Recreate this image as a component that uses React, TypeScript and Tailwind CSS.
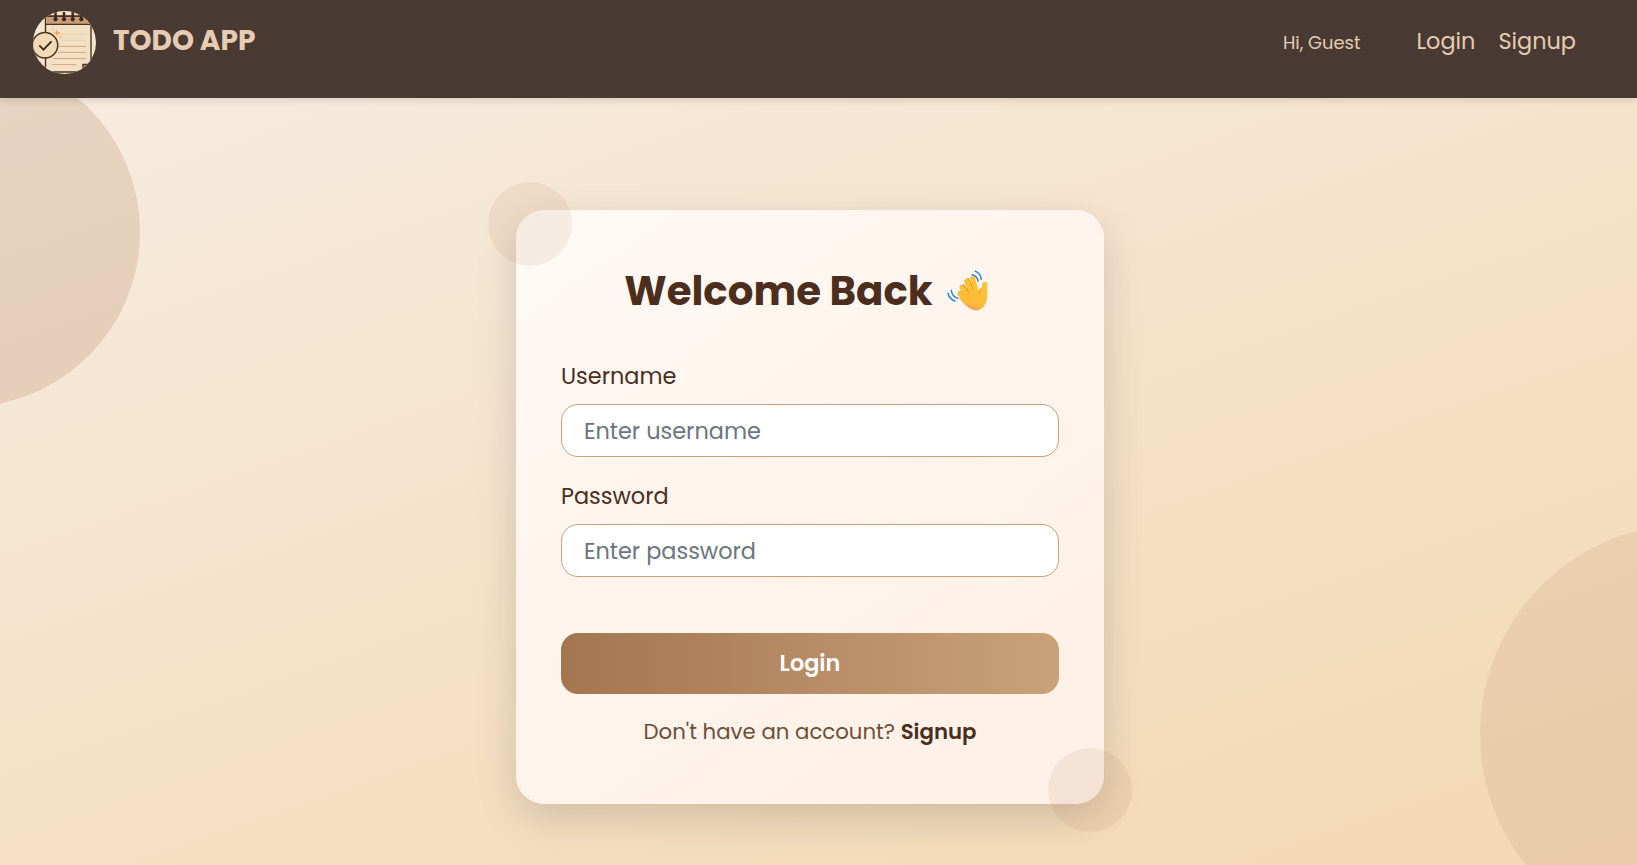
import { useState } from "react";

function Logo() {
  return (
    <svg viewBox="0 0 63 63" className="h-[63px] w-[63px] shrink-0" aria-label="Todo app logo">
      <defs>
        <clipPath id="logo-clip"><circle cx="31.5" cy="31.5" r="31.5" /></clipPath>
      </defs>
      <g clipPath="url(#logo-clip)">
        <rect width="63" height="63" fill="#f6e5cc" />
        <rect x="12.5" y="5.5" width="45.5" height="55.5" rx="2" fill="#f1e0c4" stroke="#4a3222" strokeWidth="1.4" />
        <rect x="13.2" y="6" width="44" height="7" fill="#c99c77" />
        <path d="M12.5 13.3H58M12.5 4.8H58" stroke="#4a3222" strokeWidth="1.3" />
        <path d="M22.5 1v7M31 1v7M39.7 1v7M48.3 1v7" stroke="#39291f" strokeWidth="2.5" />
        <g fill="#39291f">
          <circle cx="22.5" cy="8.3" r="2.1" /><circle cx="31" cy="8.3" r="2.1" />
          <circle cx="39.7" cy="8.3" r="2.1" /><circle cx="48.3" cy="8.3" r="2.1" />
        </g>
        <path d="M29 23.3h24M27 29.3h26" stroke="#e6cfab" strokeWidth="1" />
        <path d="M25 35.4h28M25 41.4h28M20 47.5h33M19 53.6h24" stroke="#d0a884" strokeWidth="1" />
        <path d="M50 63v-9.5h8" fill="#c99c77" stroke="#4a3222" strokeWidth="1.4" />
        <path d="M24 18l1 2.9 2.9 1-2.9 1-1 2.9-1-2.9-2.9-1 2.9-1zM27.8 24l.5 1.4 1.4.5-1.4.5-.5 1.4-.5-1.4-1.4-.5 1.4-.5zM20 17.5l.3 1 .9.3-.9.3-.3.9-.3-.9-.9-.3.9-.3z" fill="#f1a957" />
        <circle cx="12" cy="34.2" r="12.7" fill="#f2d9b8" stroke="#4a3222" strokeWidth="1.5" />
        <path d="M6.3 34.4l4.2 4.2 8-8.2" fill="none" stroke="#39291f" strokeWidth="1.9" />
      </g>
    </svg>
  );
}

function WavingHand() {
  return (
    <svg viewBox="0 0 42 42" className="h-[42px] w-[42px] shrink-0" aria-label="waving hand">
      <defs>
        <linearGradient id="hand-fill" gradientUnits="userSpaceOnUse" x1="33" y1="10" x2="22" y2="41">
          <stop offset="0" stopColor="#ffc631" />
          <stop offset="0.78" stopColor="#ffb93c" />
          <stop offset="1" stopColor="#f98e66" />
        </linearGradient>
      </defs>
      <g fill="none" stroke="#1b7fcc" strokeWidth="1.4" strokeLinecap="round">
        <path d="M25 4.6c3.3.9 5.6 3.2 6.2 6.8M28.2 1.2c3.5 1.3 5.7 4.3 6 8.2M4.4 20.2c.2 3.7 2.6 6.8 6.3 8.2M1 23.2c.5 3.7 2.9 6.5 6.9 7.8" />
      </g>
      <path
        d="M12 27.5L22 17L31 21C33 17.5 38 16 40 18C40.5 22 40.6 27.5 39.5 31.5C37.5 37.5 33.5 40.6 28.5 40.4C24 40 20 37 17 33.6C14.6 31 12 28.5 10.8 25.4Z"
        fill="url(#hand-fill)"
      />
      <g fill="none" strokeLinecap="round">
        <path d="M13.4 23.2l7 6" stroke="#d98a1c" strokeWidth="4.8" />
        <path d="M12.8 23.8l8 7.6" stroke="url(#hand-fill)" strokeWidth="4.8" />
        <path d="M15.8 16.8l7 9.8" stroke="#d98a1c" strokeWidth="4.8" />
        <path d="M15 17.3l7.6 11.6" stroke="url(#hand-fill)" strokeWidth="4.9" />
        <path d="M20.4 10.8l5.6 11.6" stroke="#d98a1c" strokeWidth="4.8" />
        <path d="M19.6 11.2l6.2 14" stroke="url(#hand-fill)" strokeWidth="4.9" />
        <path d="M25.6 8.6l4.8 16" stroke="url(#hand-fill)" strokeWidth="5" />
        <path d="M37.7 14.2l-.7 9" stroke="url(#hand-fill)" strokeWidth="5" />
        <path d="M34.4 18.6c-.5 2.3-2.2 3.2-2.1 5.4" stroke="#e2941f" strokeWidth="0.8" />
      </g>
    </svg>
  );
}

interface FieldProps {
  id: string;
  label: string;
  type: string;
  value: string;
  onChange: (value: string) => void;
}

function Field({ id, label, type, value, onChange }: FieldProps) {
  return (
    <div className="flex flex-col">
      <label htmlFor={id} className="mb-[11px] text-[22.4px] leading-[34px] text-[#4b2e1e]">{label}</label>
      <input
        id={id}
        type={type}
        value={value}
        onChange={(e) => onChange(e.target.value)}
        placeholder={`Enter ${id}`}
        className="h-[53px] w-full rounded-[17px] border border-[#c9a27a] bg-white px-[22px] text-[22.4px] text-[#4b2e1e] outline-none placeholder:text-[#6c757d]"
      />
    </div>
  );
}

export default function App() {
  const [username, setUsername] = useState("");
  const [password, setPassword] = useState("");

  return (
    <div className="flex h-screen flex-col overflow-hidden font-[Poppins,Inter,sans-serif]">
      <header className="z-10 flex h-[98px] shrink-0 items-start justify-between bg-[#493b34] pl-[33px] pr-[61px] pt-[11px] text-[#e6ccb2] shadow-[0_3px_7px_rgba(0,0,0,0.1)]">
        <div className="flex items-center gap-[17px]">
          <Logo />
          <span className="-mt-[3px] text-[28px] font-bold leading-none">TODO APP</span>
        </div>
        <nav className="flex h-[61px] items-center">
          <span className="mr-[56px] mt-[4px] text-[17.92px]">Hi, Guest</span>
          <a href="#login" className="mr-[23px] text-[22.4px]">Login</a>
          <a href="#signup" className="text-[22.4px]">Signup</a>
        </nav>
      </header>

      <main className="relative flex flex-1 justify-center overflow-hidden bg-[linear-gradient(161deg,#f7ebde,#f3d8b3)] pr-[17px] pt-[112px]">
        <div className="absolute -left-[210px] -top-[41px] h-[350px] w-[350px] rounded-full bg-[#a47551]/20" />
        <div className="absolute -right-[263px] top-[426px] h-[420px] w-[420px] rounded-full bg-[#a47551]/12" />

        <section className="relative flex h-[594px] w-[588px] flex-col rounded-[28px] bg-[linear-gradient(145deg,#fffaf4,#fff5ee_40%,#fdf0e5)] px-[45px] pt-[56px] shadow-[0_14px_42px_rgba(0,0,0,0.15)]">
          <div className="absolute -left-[28px] -top-[28px] h-[84px] w-[84px] rounded-full bg-[#a47551]/10" />
          <div className="absolute -bottom-[28px] -right-[28px] h-[84px] w-[84px] rounded-full bg-[#a47551]/10" />

          <h1 className="flex h-[50px] items-center justify-center gap-[14px] pr-[7px] text-[40.32px] font-bold text-[#4b2e1e]">
            <span>Welcome Back</span>
            <WavingHand />
          </h1>

          <form className="mt-[43px] flex flex-col gap-[22px]" onSubmit={(e) => e.preventDefault()}>
            <Field id="username" label="Username" type="text" value={username} onChange={setUsername} />
            <Field id="password" label="Password" type="password" value={password} onChange={setPassword} />
            <button type="submit" className="mt-[34px] h-[61px] rounded-[17px] bg-linear-to-r from-[#a47551] to-[#c9a27a] text-[22.4px] font-semibold text-white">
              Login
            </button>
          </form>

          <p className="mt-[22px] text-center text-[21.28px] leading-[32px] text-[#6f4e37]">
            Don't have an account? <a href="#signup" className="font-semibold text-[#4b2e1e]">Signup</a>
          </p>
        </section>
      </main>
    </div>
  );
}
